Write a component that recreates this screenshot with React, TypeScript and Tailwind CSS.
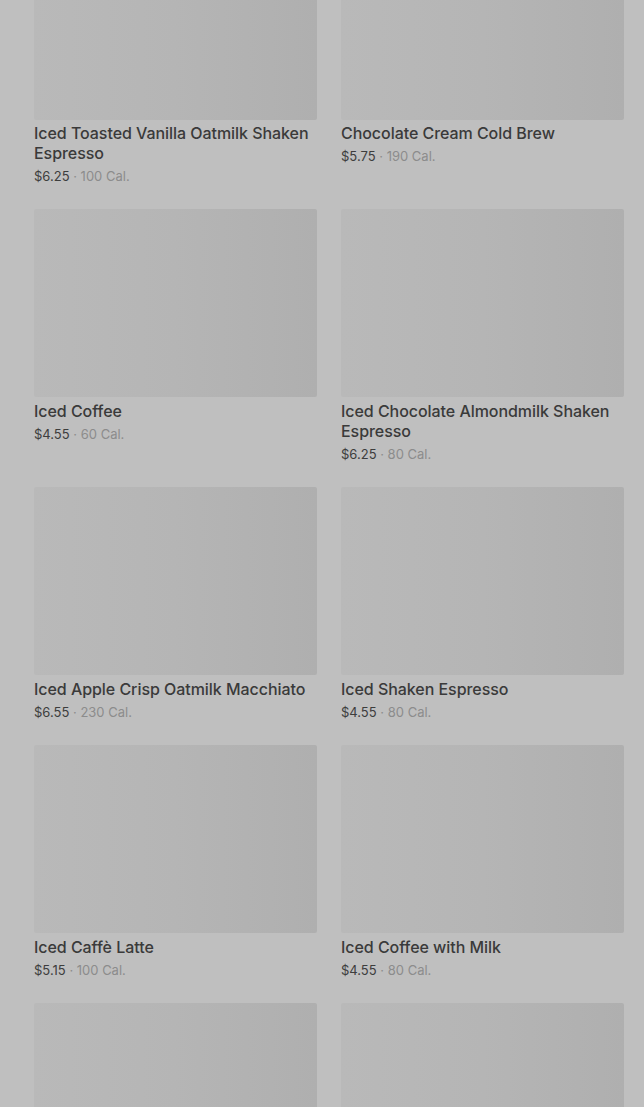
import React from "react";

const items = [
  { name: "Iced Toasted Vanilla Oatmilk Shaken Espresso", price: "$6.25", cal: "100 Cal." },
  { name: "Chocolate Cream Cold Brew", price: "$5.75", cal: "190 Cal." },
  { name: "Iced Coffee", price: "$4.55", cal: "60 Cal." },
  { name: "Iced Chocolate Almondmilk Shaken Espresso", price: "$6.25", cal: "80 Cal." },
  { name: "Iced Apple Crisp Oatmilk Macchiato", price: "$6.55", cal: "230 Cal." },
  { name: "Iced Shaken Espresso", price: "$4.55", cal: "80 Cal." },
  { name: "Iced Caffè Latte", price: "$5.15", cal: "100 Cal." },
  { name: "Iced Coffee with Milk", price: "$4.55", cal: "80 Cal." },
  { name: "", price: "", cal: "" },
  { name: "", price: "", cal: "" },
];

export default function App() {
  return (
    <div className="w-[644px] h-[1107px] overflow-hidden bg-[#bfbfbf]" style={{ fontFamily: "Inter, 'Noto Sans', sans-serif" }}>
      <div className="mt-[-68px] pl-[34px] pr-[20px] grid grid-cols-2 gap-x-[24px] gap-y-[23px]">
        {items.map((it, i) => (
          <div key={i} className="flex flex-col">
            <div className="h-[188px] w-full rounded-[2px] bg-gradient-to-r from-[#b9b9b9] via-[#b5b5b5] to-[#afafaf]" />
            {it.name && (
              <>
                <div className={(i < 2 ? "mt-[3px]" : "mt-[4px]") + " text-[16px] leading-[20px] font-medium text-[#3a3a3a] tracking-[-0.05px]"}>{it.name}</div>
                <div className="mt-[3px] text-[13px] leading-[20px] text-[#3d3d3d]">
                  {it.price}
                  <span className="text-[#8c8c8c]"> · {it.cal}</span>
                </div>
              </>
            )}
          </div>
        ))}
      </div>
    </div>
  );
}
